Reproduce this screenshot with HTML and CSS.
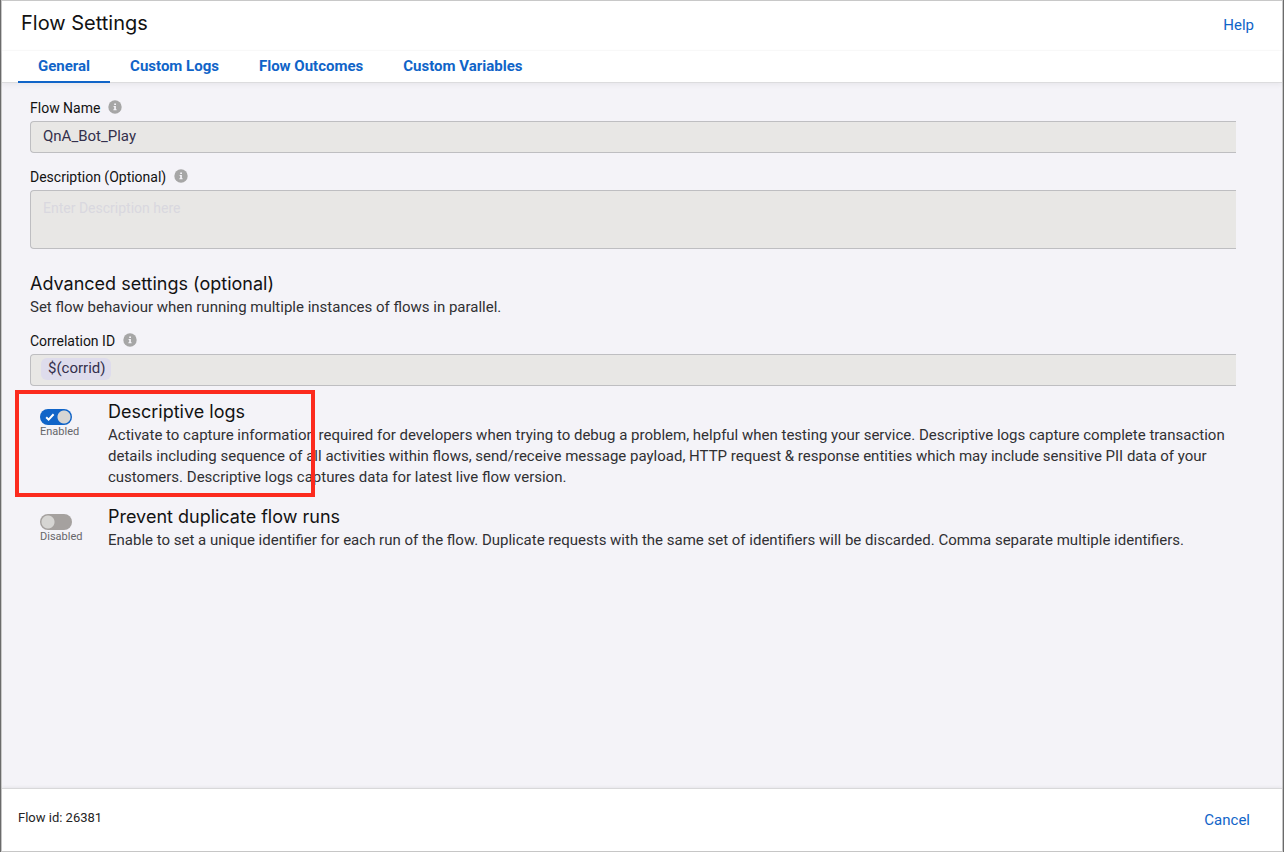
FILE: index.html
```
<!DOCTYPE html>
<html lang="en">
<head>
<meta charset="utf-8">
<title>Flow Settings</title>
<meta name="viewport" content="width=device-width, initial-scale=1">
<link rel="stylesheet" href="styles.css">
</head>
<body>
<svg class="defs" aria-hidden="true">
  <symbol id="info" viewBox="0 0 14 14">
    <circle cx="7" cy="7" r="6.7" fill="#a6a6a6"/>
    <path d="M6.2 3.5h1.8v1.5H6.2zM5.6 6h2.3v3.2h.7v1H5.4v-1h.8V7h-.6z" fill="#f4f3f8"/>
  </symbol>
</svg>
<div class="dialog">
  <header class="header">
    <h1 class="title">Flow Settings</h1>
    <a class="link" href="#help">Help</a>
  </header>
  <nav class="tabs" aria-label="Settings sections">
    <a class="tab tab-active" href="#general" aria-current="page">General</a>
    <a class="tab" href="#logs">Custom Logs</a>
    <a class="tab" href="#outcomes">Flow Outcomes</a>
    <a class="tab" href="#variables">Custom Variables</a>
  </nav>
  <main class="content">
    <div class="field">
      <div class="label-row"><label for="name">Flow Name</label><svg class="info"><use href="#info"/></svg></div>
      <input class="box" id="name" type="text" value="QnA_Bot_Play" readonly>
    </div>
    <div class="field">
      <div class="label-row"><label for="description">Description (Optional)</label><svg class="info"><use href="#info"/></svg></div>
      <textarea class="box box-tall" id="description" placeholder="Enter Description here" readonly></textarea>
    </div>
    <section class="advanced">
      <h2 class="heading">Advanced settings (optional)</h2>
      <p class="text">Set flow behaviour when running multiple instances of flows in parallel.</p>
    </section>
    <div class="field">
      <div class="label-row"><label for="correlation">Correlation ID</label><svg class="info"><use href="#info"/></svg></div>
      <div class="box box-chip"><input class="chip" id="correlation" type="text" value="$(corrid)" readonly></div>
    </div>
    <section class="option">
      <div class="switch">
        <input class="toggle" id="logs-toggle" type="checkbox" role="switch" aria-labelledby="logs-title" checked>
        <label class="state" for="logs-toggle">Enabled</label>
      </div>
      <div class="option-body">
        <h2 class="heading" id="logs-title">Descriptive logs</h2>
        <p class="text">Activate to capture information required for developers when trying to debug a problem, helpful when testing your service. Descriptive logs capture complete transaction details including sequence of all activities within flows, send/receive message payload, HTTP request &amp; response entities which may include sensitive PII data of your customers. Descriptive logs captures data for latest live flow version.</p>
      </div>
      <svg class="tick" viewBox="0 0 10 8" aria-hidden="true"><path d="M1.2 4.3 3.6 6.6 8.6 1.2" fill="none" stroke="#fff" stroke-width="2"/></svg>
      <div class="highlight"></div>
    </section>
    <section class="option">
      <div class="switch">
        <input class="toggle" id="runs-toggle" type="checkbox" role="switch" aria-labelledby="runs-title">
        <label class="state" for="runs-toggle">Disabled</label>
      </div>
      <div class="option-body">
        <h2 class="heading" id="runs-title">Prevent duplicate flow runs</h2>
        <p class="text">Enable to set a unique identifier for each run of the flow. Duplicate requests with the same set of identifiers will be discarded. Comma separate multiple identifiers.</p>
      </div>
    </section>
  </main>
  <footer class="footer">
    <span class="flow-id">Flow id: 26381</span>
    <button class="link" type="button">Cancel</button>
  </footer>
</div>
</body>
</html>
```
FILE: styles.css
```
* { box-sizing: border-box; }

body {
  margin: 0;
  background: #6b6b6b;
  color: #121212;
  font-family: Roboto, "Liberation Sans", sans-serif;
}

.defs { position: absolute; width: 0; height: 0; }

.dialog {
  display: flex;
  flex-direction: column;
  min-height: 100vh;
  margin: 0 1px;
  border: 1px solid #c8c8c8;
  background: #fff;
}

.header {
  display: flex;
  align-items: baseline;
  justify-content: space-between;
  padding: 7px 28px 12px 19px;
  border-bottom: 1px solid #fafafa;
}

.title {
  margin: 0;
  font: 400 20px/30px Inter, "Liberation Sans", sans-serif;
}

.link {
  padding: 0;
  border: 0;
  background: none;
  color: #1064c8;
  font: 400 15px/24px Roboto, "Liberation Sans", sans-serif;
  text-decoration: none;
  cursor: pointer;
}

.tabs {
  position: relative;
  display: flex;
  padding-left: 16px;
  border-bottom: 1px solid #dcdcde;
  box-shadow: 0 2px 5px rgba(0, 0, 0, 0.05);
}

.tab {
  margin-bottom: -1px;
  padding: 5px 20px;
  border-bottom: 2px solid transparent;
  color: #1064c8;
  font-size: 15px;
  font-weight: 700;
  line-height: 20px;
  text-decoration: none;
}

.tab-active { border-bottom-color: #1064c8; }

.content {
  flex: 1;
  padding: 14px 46px 14px 28px;
  background: #f4f3f8;
}

.field { margin-bottom: 13px; }

.label-row {
  display: flex;
  align-items: flex-start;
  gap: 8px;
  margin-bottom: 2px;
  font-size: 14px;
  line-height: 22px;
}

.info {
  width: 14px;
  height: 14px;
  margin-top: 3px;
}

.box {
  display: block;
  width: 100%;
  height: 32px;
  padding: 0 12px 2px;
  border: 1px solid #bebec1;
  border-right: 0;
  border-radius: 4px 0 0 4px;
  outline: 0;
  background: #e8e7e5;
  color: #34304c;
  font: 400 15px/20px Roboto, "Liberation Sans", sans-serif;
}

.box-tall {
  height: 59px;
  padding: 7px 12px;
  font-size: 14px;
  resize: none;
}

.box-tall::placeholder { color: #d9d8df; }

.box-chip { padding: 3px 10px; }

.chip {
  display: block;
  width: 70px;
  height: 22px;
  padding: 0 6px 2px 7px;
  border: 0;
  border-radius: 6px;
  outline: 0;
  background: #dedcec;
  color: #34304c;
  font: inherit;
}

.advanced { margin: 22px 0 12px; }

.heading {
  margin: 0;
  font: 400 18px/26px Inter, "Liberation Sans", sans-serif;
}

.text {
  margin: 0;
  color: #303033;
  font-size: 15px;
  line-height: 21px;
}

.option {
  position: relative;
  display: flex;
  margin-bottom: 16px;
}

.switch {
  display: flex;
  flex: 0 0 78px;
  flex-direction: column;
  align-items: flex-start;
  padding: 10px 0 0 10px;
}

.toggle {
  width: 32px;
  height: 16px;
  margin: 0;
  border-radius: 8px;
  appearance: none;
  background: radial-gradient(circle at 8px 8px, #d6d5d3 6px, transparent 7px), #a5a19f;
}

.toggle:checked {
  background: radial-gradient(circle at 24px 8px, #d6d5d3 6px, transparent 7px), #1064c8;
}

.state {
  color: #66666a;
  font-size: 11px;
  line-height: 13px;
}

.tick {
  position: absolute;
  top: 14px;
  left: 15px;
  width: 10px;
  height: 8px;
  pointer-events: none;
}

.highlight {
  position: absolute;
  top: -9px;
  left: -15px;
  width: 300px;
  height: 107px;
  border: 4px solid #fc2b1e;
  pointer-events: none;
}

.footer {
  position: relative;
  display: flex;
  align-items: center;
  justify-content: space-between;
  padding: 19px 32px 19px 16px;
  border-top: 1px solid #d8d8da;
  box-shadow: 0 -1px 3px rgba(0, 0, 0, 0.06);
}

.flow-id {
  padding-bottom: 4px;
  color: #242424;
  font-size: 13px;
  line-height: 20px;
}
```
